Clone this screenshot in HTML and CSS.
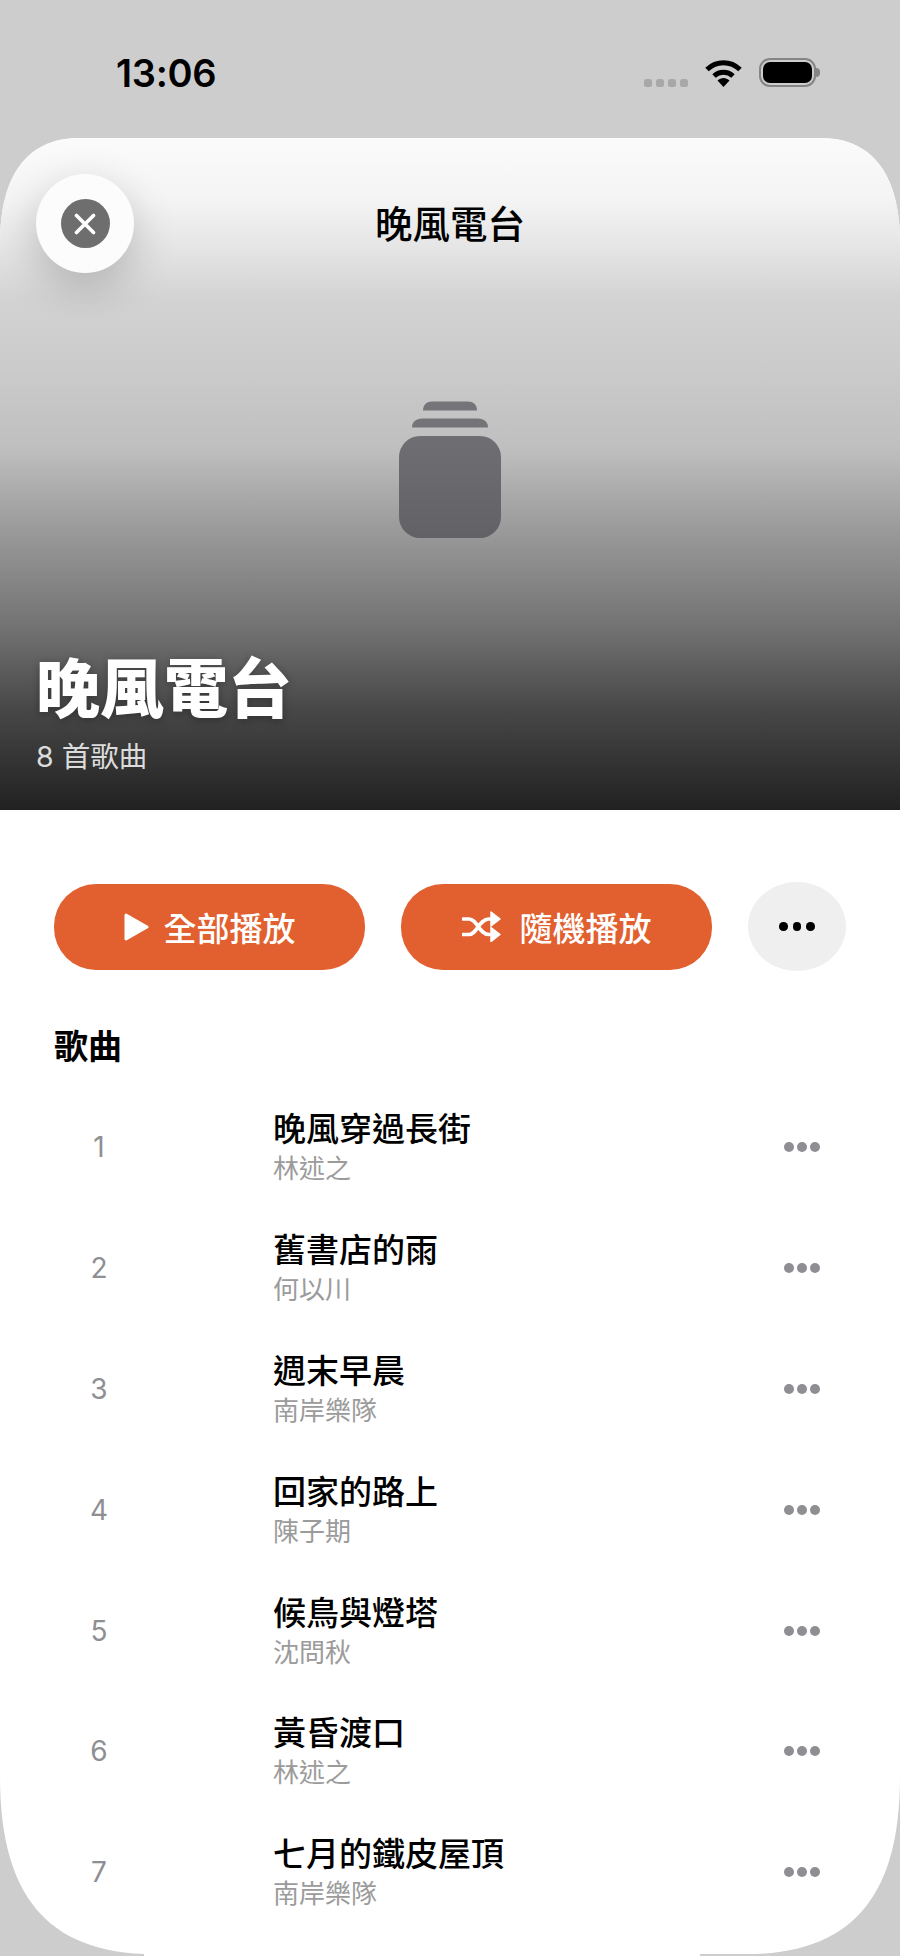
FILE: index.html
```html
<!DOCTYPE html>
<html lang="zh-Hant">
<head>
<meta charset="utf-8">
<title>晚風電台</title>
<link rel="stylesheet" href="styles.css">
</head>
<body>
<div class="status">
  <span class="time">13:06</span>
  <div class="status-icons">
    <div class="signal"><i></i><i></i><i></i><i></i></div>
    <svg class="wifi" viewBox="0 0 37 29" width="37" height="29">
      <path d="M2 11.5C11.5 2.5 25.5 2.5 35 11.5" fill="none" stroke="#000" stroke-width="5"/>
      <path d="M9 18C14.5 13 22.5 13 28 18" fill="none" stroke="#000" stroke-width="5"/>
      <path d="M12.5 22.5C16 19 21 19 24.5 22.5L18.5 29Z" fill="#000"/>
    </svg>
    <div class="battery"><div class="battery-fill"></div></div>
    <div class="battery-nub"></div>
  </div>
</div>
<main class="card">
  <section class="hero">
    <header class="hero-top">
      <button class="close">
        <span class="close-disc">
          <svg viewBox="0 0 22 22" width="22" height="22"><path d="M2.5 2.5L19.5 19.5M19.5 2.5L2.5 19.5" stroke="#fff" stroke-width="3.6" stroke-linecap="round"/></svg>
        </span>
      </button>
      <h2 class="hero-name">晚風電台</h2>
    </header>
    <svg class="stack" viewBox="0 0 102 138" width="102" height="138">
      <defs><linearGradient id="stackFill" x1="0" y1="0" x2="0" y2="1"><stop offset="0" stop-color="#6f6e73"/><stop offset="1" stop-color="#626165"/></linearGradient></defs>
      <path d="M24 9.5C24 3.5 28 0.5 33 0.5H69C74 0.5 78 3.5 78 9.5Z" fill="#757478"/>
      <path d="M13 26.5C13 21 17 17.5 23 17.5H79C85 17.5 89 21 89 26.5Z" fill="#747377"/>
      <rect x="0" y="35" width="102" height="102" rx="21" fill="url(#stackFill)"/>
    </svg>
    <div class="hero-info">
      <h1 class="hero-title">晚風電台</h1>
      <p class="hero-sub">8 首歌曲</p>
    </div>
  </section>

  <div class="actions">
    <button class="action">
      <svg viewBox="0 0 25 28" width="25" height="28"><path d="M2 2L23 14L2 26Z" fill="#fff" stroke="#fff" stroke-width="3" stroke-linejoin="round"/></svg>
      <span>全部播放</span>
    </button>
    <button class="action action-shuffle">
      <svg viewBox="0 0 39 31" width="39" height="31">
        <path d="M1 8H7C15 8 17 23.5 27 23.5H31M1 23.5H7C15 23.5 17 8 27 8H31" fill="none" stroke="#fff" stroke-width="3.6" stroke-linecap="round"/>
        <path d="M29 1L38 8L29 15ZM29 16.5L38 23.5L29 30.5Z" fill="#fff" stroke="#fff" stroke-width="1.5" stroke-linejoin="round"/>
      </svg>
      <span>隨機播放</span>
    </button>
    <button class="more"><i></i><i></i><i></i></button>
  </div>

  <h3 class="section-title">歌曲</h3>

  <ol class="tracks">
    <li class="track"><span class="num">1</span><div class="info"><div class="name">晚風穿過長街</div><div class="artist">林述之</div></div><div class="dots"><i></i><i></i><i></i></div></li>
    <li class="track"><span class="num">2</span><div class="info"><div class="name">舊書店的雨</div><div class="artist">何以川</div></div><div class="dots"><i></i><i></i><i></i></div></li>
    <li class="track"><span class="num">3</span><div class="info"><div class="name">週末早晨</div><div class="artist">南岸樂隊</div></div><div class="dots"><i></i><i></i><i></i></div></li>
    <li class="track"><span class="num">4</span><div class="info"><div class="name">回家的路上</div><div class="artist">陳子期</div></div><div class="dots"><i></i><i></i><i></i></div></li>
    <li class="track"><span class="num">5</span><div class="info"><div class="name">候鳥與燈塔</div><div class="artist">沈問秋</div></div><div class="dots"><i></i><i></i><i></i></div></li>
    <li class="track"><span class="num">6</span><div class="info"><div class="name">黃昏渡口</div><div class="artist">林述之</div></div><div class="dots"><i></i><i></i><i></i></div></li>
    <li class="track"><span class="num">7</span><div class="info"><div class="name">七月的鐵皮屋頂</div><div class="artist">南岸樂隊</div></div><div class="dots"><i></i><i></i><i></i></div></li>
  </ol>
</main>
<div class="bottom-strip"></div>
</body>
</html>
```
FILE: styles.css
```css
* { box-sizing: border-box; }
html, body { margin: 0; padding: 0; }
body {
  width: 900px;
  height: 1956px;
  overflow: hidden;
  background: #cdcdcd;
  font-family: Inter, "Noto Sans CJK TC", sans-serif;
  color: #000;
}
button { border: 0; padding: 0; font: inherit; }
h1, h2, h3, p, ol { margin: 0; padding: 0; }
ol { list-style: none; }
i { display: block; }

.status {
  height: 138px;
  padding: 52px 84px 0 116px;
  display: flex;
  justify-content: space-between;
  align-items: flex-start;
}
.time { font-size: 38px; font-weight: 600; line-height: 42px; letter-spacing: -0.3px; }
.status-icons { display: flex; align-items: flex-end; height: 29px; margin-top: 6px; }
.signal { display: flex; gap: 4px; margin-right: 17px; }
.signal i { width: 8px; height: 8px; border-radius: 2.5px; background: #a8a8a8; }
.battery {
  width: 57px; height: 29px; margin-left: 17px;
  border: 2.5px solid #858585; border-radius: 11px; padding: 2px;
}
.battery-fill { width: 100%; height: 100%; background: #000; border-radius: 7px; }
.battery-nub { width: 4px; height: 9px; margin: 0 -4px 10px 0; background: #858585; border-radius: 0 4px 4px 0; }

.card {
  height: 1816px;
  background: #fff;
  clip-path: path("M0 105C0 40 25 0 80 0H820C875 0 900 40 900 105V1638C900 1742 865 1812 756 1816H144C35 1812 0 1742 0 1638Z");
}
.bottom-strip { height: 2px; margin: 0 200px 0 144px; background: #fff; }

.hero {
  height: 672px;
  padding: 36px 36px 0;
  display: flex;
  flex-direction: column;
  background: linear-gradient(180deg, #fbfbfb 0, #f4f4f4 60px, #e5e5e5 110px, #d3d3d3 160px, #cbcbcb 230px, #bfbfbf 310px, #9d9d9d 385px, #727272 490px, #484848 570px, #212121 672px);
}
.hero-top { position: relative; display: flex; justify-content: center; align-items: center; height: 99px; }
.close {
  position: absolute; left: 0; top: 0;
  width: 98px; height: 99px; border-radius: 50%;
  background: #fcfcfc;
  box-shadow: 0 14px 44px rgba(0, 0, 0, 0.2);
  display: flex; align-items: center; justify-content: center;
}
.close-disc {
  width: 49px; height: 49px; border-radius: 50%; background: #6e6e6e;
  display: flex; align-items: center; justify-content: center;
}
.hero-name { font-size: 37.5px; font-weight: 500; line-height: 50px; margin-top: 3px; }
.stack { align-self: center; margin-top: 128px; }
.hero-info { margin-top: auto; padding-bottom: 35px; }
.hero-title {
  font-size: 64px; font-weight: 900; line-height: 76px; color: #fff;
  text-shadow: 0 2px 8px rgba(0, 0, 0, 0.3);
}
.hero-sub { font-size: 28.5px; line-height: 36px; color: #dcdcdc; margin-top: 12px; }

.actions { display: flex; align-items: center; gap: 36px; padding: 72px 0 0 54px; }
.action {
  width: 311px; height: 86px; border-radius: 42px;
  background: #e26030; color: #fff;
  display: flex; align-items: center; justify-content: center; gap: 15px;
  font-size: 33px; font-weight: 500;
}
.action-shuffle { gap: 19px; }
.more {
  width: 98px; height: 89px; border-radius: 50%; background: #efefef;
  display: flex; align-items: center; justify-content: center; gap: 5px;
}
.more i { width: 8.5px; height: 8.5px; border-radius: 50%; background: #000; }

.section-title { font-size: 34px; font-weight: 700; line-height: 46px; padding: 53px 0 0 54px; }

.tracks { padding-top: 16px; }
.track {
  height: 120.8px;
  display: flex; align-items: center;
  padding: 0 80px 0 54px;
}
.num { width: 90px; margin-right: 129px; margin-top: 2px; text-align: center; font-size: 28px; color: #8e8e93; }
.info { flex: 1; padding-top: 2px; }
.name { font-size: 33px; font-weight: 500; line-height: 44px; }
.artist { font-size: 26px; line-height: 36px; color: #9b9b9b; }
.dots { display: flex; gap: 3px; margin-top: 2px; }
.dots i { width: 10px; height: 10px; border-radius: 50%; background: #8e8e93; }
```
